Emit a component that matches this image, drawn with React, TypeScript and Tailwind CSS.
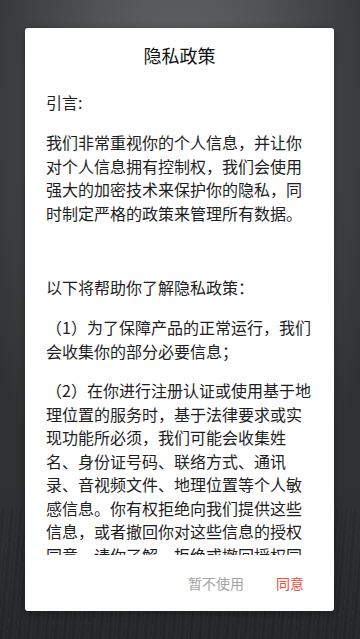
export default function App() {
  const font = { fontFamily: '"Noto Sans CJK SC", "Noto Sans", sans-serif' }

  return (
    <div
      className="relative h-[639px] w-full overflow-hidden bg-[#3c3e40] pt-[28px] px-[25px]"
      style={font}
    >
      {/* backdrop */}
      <div className="absolute inset-0 bg-[radial-gradient(ellipse_60%_70%_at_50%_20%,#656769_0%,#515355_45%,#2f3133_100%)]" />
      <div className="absolute inset-x-0 bottom-0 h-[150px] bg-[linear-gradient(to_bottom,transparent_0%,#2b2d2f_30%,#232527_100%)]" />
      <div className="absolute inset-x-0 bottom-0 h-[130px] opacity-40 bg-[repeating-linear-gradient(95deg,#3a3c3e_0px,#1f2123_3px,#34363a_6px,#202224_9px)]" />

      {/* dialog */}
      <div className="relative flex h-[583px] w-[309px] flex-col rounded-[3px] bg-white shadow-[0_2px_10px_rgba(0,0,0,0.35)]">
        <div className="flex h-[54px] items-center justify-center text-[18px] font-normal text-[#111111]">
          隐私政策
        </div>

        <div className="flex-1 overflow-hidden px-[21px] pt-[9px] text-[16px] leading-[23.5px] text-[#1e1e1e]">
          <p>引言:</p>
          <p className="mt-[16.5px]">
            我们非常重视你的个人信息，并让你对个人信息拥有控制权，我们会使用强大的加密技术来保护你的隐私，同时制定严格的政策来管理所有数据。
          </p>
          <p className="mt-[51px]">以下将帮助你了解隐私政策：</p>
          <p className="mt-[16.5px]">（1）为了保障产品的正常运行，我们会收集你的部分必要信息；</p>
          <p className="mt-[16px]">
            （2）在你进行注册认证或使用基于地理位置的服务时，基于法律要求或实现功能所必须，我们可能会收集姓名、身份证号码、联络方式、通讯录、音视频文件、地理位置等个人敏感信息。你有权拒绝向我们提供这些信息，或者撤回你对这些信息的授权同意。请你了解，拒绝或撤回授权同意后，你将无法使用相关的特定功能。
          </p>
        </div>

        <div className="flex h-[56px] items-center justify-end gap-[32px] pr-[30px] text-[14px]">
          <button className="text-[#a3a3a3]">暂不使用</button>
          <button className="text-[#ef5040]">同意</button>
        </div>
      </div>
    </div>
  )
}
